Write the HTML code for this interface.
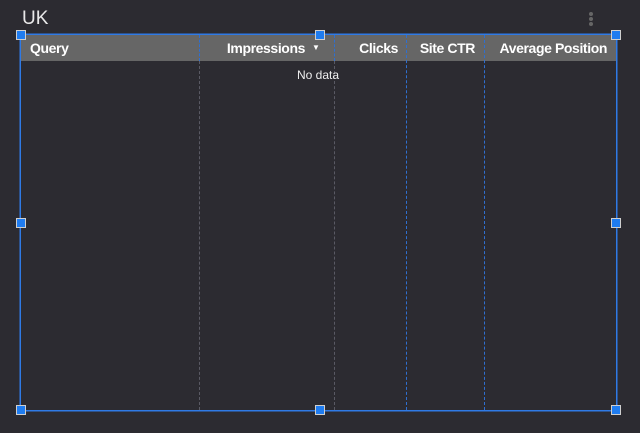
<!DOCTYPE html>
<html><head><style>
body{margin:0;width:640px;height:433px;background:#2c2b31;position:relative;overflow:hidden;font-family:"Liberation Sans",Roboto,sans-serif}
.a{position:absolute}
.title{left:22px;top:8px;font-size:19px;color:#e8e8e8}
.hdr{left:21px;top:35px;width:595px;height:26px;background:#666}
.h{top:40px;font-size:14px;font-weight:bold;color:#fff;white-space:nowrap;letter-spacing:-0.4px}
.r{text-align:right}
.box{left:20px;top:34px;width:595px;height:375px;border:1px solid #2f7ae5;box-shadow:0 0 0 0.5px #2f7ae5}
.v{top:35px;height:375px;width:0;border-left:1px dashed #2f6fd0}
.vg{border-left-color:#5a5a64}
.hd{width:8px;height:8px;background:#1f7cf0;border:1px solid #cfcfcf}
.dot{width:4px;height:4px;border-radius:2px;background:#666;left:589px}
</style></head><body>
<div class="a title">UK</div>
<div class="a dot" style="top:12px"></div>
<div class="a dot" style="top:17px"></div>
<div class="a dot" style="top:22px"></div>
<div class="a hdr"></div>
<div class="a v vg" style="left:199px;top:61px;height:349px"></div>
<div class="a v" style="left:199px;height:26px"></div>
<div class="a v vg" style="left:334px;top:61px;height:349px"></div>
<div class="a v" style="left:334px;height:26px"></div>
<div class="a v" style="left:406px"></div>
<div class="a v" style="left:484px"></div>
<div class="a h" style="left:30px">Query</div>
<div class="a h r" style="right:335px">Impressions</div>
<div class="a" style="left:312px;top:43px;font-size:8px;color:#fff">▼</div>
<div class="a h r" style="right:242px">Clicks</div>
<div class="a h r" style="right:165px">Site CTR</div>
<div class="a h r" style="right:33px">Average Position</div>
<div class="a" style="left:297px;top:68px;font-size:12px;color:#eee">No data</div>
<div class="a box"></div>
<div class="a hd" style="left:16px;top:30px"></div>
<div class="a hd" style="left:315px;top:30px"></div>
<div class="a hd" style="left:611px;top:30px"></div>
<div class="a hd" style="left:16px;top:218px"></div>
<div class="a hd" style="left:611px;top:218px"></div>
<div class="a hd" style="left:16px;top:405px"></div>
<div class="a hd" style="left:315px;top:405px"></div>
<div class="a hd" style="left:611px;top:405px"></div>
</body></html>
